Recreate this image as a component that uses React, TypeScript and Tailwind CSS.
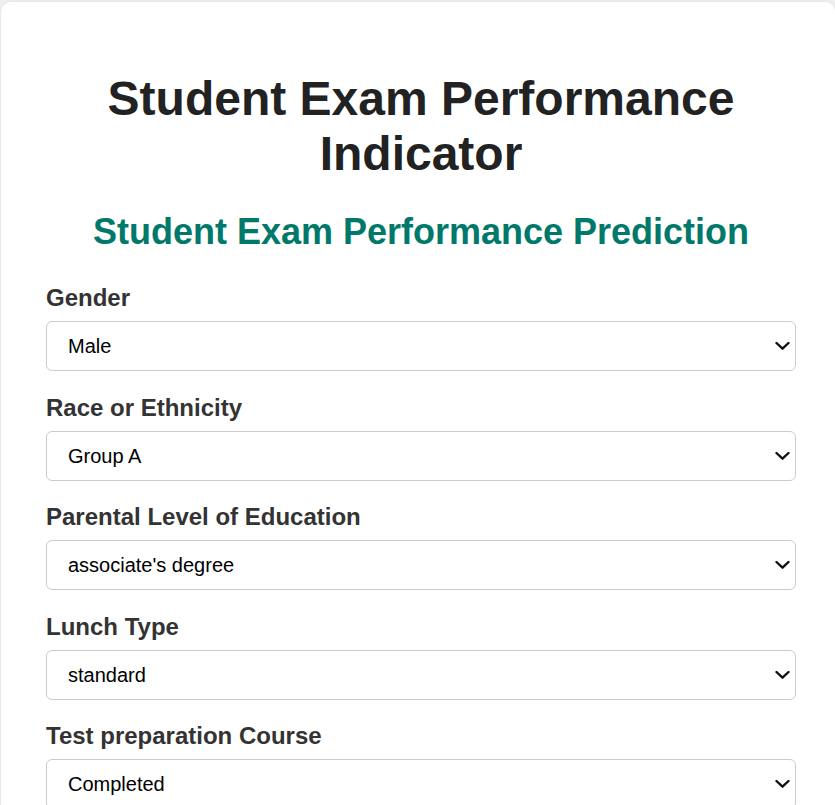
import { useState } from "react";

const fields = [
  { label: "Gender", options: ["Male", "Female"] },
  { label: "Race or Ethnicity", options: ["Group A", "Group B", "Group C", "Group D", "Group E"] },
  {
    label: "Parental Level of Education",
    options: ["associate's degree", "bachelor's degree", "high school", "master's degree", "some college", "some high school"],
  },
  { label: "Lunch Type", options: ["standard", "free/reduced"] },
  { label: "Test preparation Course", options: ["Completed", "None"] },
];

const Chevron = () => (
  <svg
    className="pointer-events-none absolute right-[6px] top-1/2 -translate-y-1/2"
    width="15"
    height="9"
    viewBox="0 0 15 9"
    fill="none"
  >
    <path d="M1.5 1.5 L7.5 7.2 L13.5 1.5" stroke="#111" strokeWidth="2.4" strokeLinecap="round" strokeLinejoin="round" />
  </svg>
);

const App = () => {
  const [values, setValues] = useState<string[]>(fields.map((f) => f.options[0]));

  return (
    <div className="min-h-screen bg-[#f2f2f2] pt-[2px] pl-[1px] font-['Liberation_Sans',Arial,sans-serif]">
      <div className="bg-white rounded-t-[10px] shadow-[0_0_8px_rgba(0,0,0,0.08)] pl-[45px] pr-[39px] pt-[69px] pb-10">
        <h1 className="text-center text-[48px] leading-[55px] font-bold text-[#222]">
          Student Exam Performance Indicator
        </h1>
        <h2 className="mt-[30px] text-center text-[36px] leading-[42px] font-bold text-[#00796b]">
          Student Exam Performance Prediction
        </h2>
        <form className="mt-[31px] flex flex-col">
          {fields.map((field, i) => (
            <div key={field.label} className="mb-[22.5px] flex flex-col">
              <label className="mb-[9px] text-[24px] leading-[28px] font-bold text-[#333]">
                {field.label}
              </label>
              <div className="relative">
                <select
                  value={values[i]}
                  onChange={(e) => {
                    const next = [...values];
                    next[i] = e.target.value;
                    setValues(next);
                  }}
                  className="block h-[50px] w-full appearance-none rounded-[6px] border border-[#ccc] bg-white pl-[21px] pr-8 text-[20px] text-black"
                >
                  {field.options.map((o) => (
                    <option key={o}>{o}</option>
                  ))}
                </select>
                <Chevron />
              </div>
            </div>
          ))}
        </form>
      </div>
    </div>
  );
};

export default App;
